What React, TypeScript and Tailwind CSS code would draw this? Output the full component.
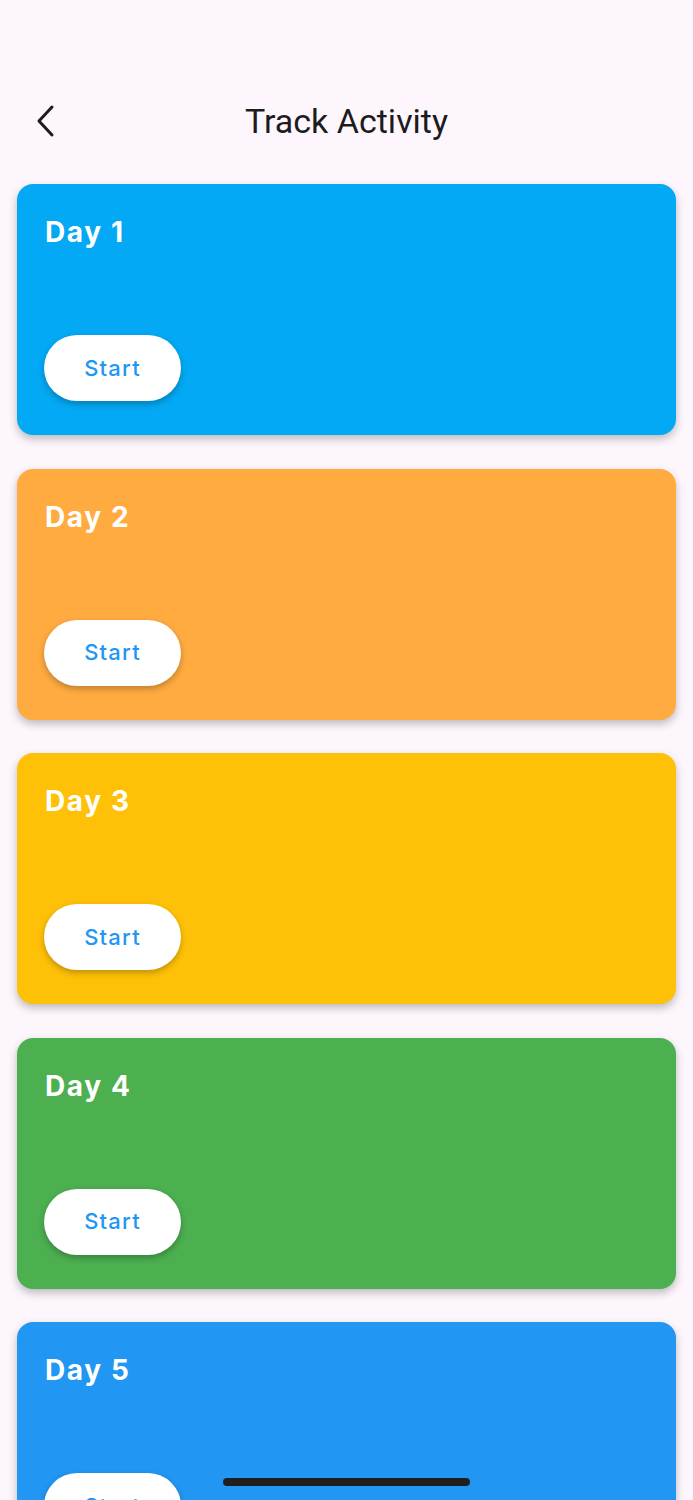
import React from 'react';

// ─── Data ────────────────────────────────────────────────────────────────────
const days = [
  { label: 'Day 1', bg: 'bg-[#03a9f4]' },
  { label: 'Day 2', bg: 'bg-[#ffab40]' },
  { label: 'Day 3', bg: 'bg-[#ffc107]' },
  { label: 'Day 4', bg: 'bg-[#4caf50]' },
  { label: 'Day 5', bg: 'bg-[#2196f3]' },
];

function BackIcon() {
  return (
    <svg width="24" height="34" viewBox="0 0 24 34" fill="none">
      <path d="M19 3 L6 17 L19 31" stroke="#1d1b20" strokeWidth="3" strokeLinecap="round" strokeLinejoin="round" />
    </svg>
  );
}

function DayCard({ label, bg }: { label: string; bg: string }) {
  return (
    <div className={`${bg} h-[251px] shrink-0 rounded-[16px] shadow-[0_4px_8px_rgba(0,0,0,0.25)] px-[27px] pt-[30px]`}>
      <div className="font-['Inter',sans-serif] text-[28px] font-bold leading-[36px] text-white tracking-[1.6px] pl-[1px]">{label}</div>
      <button className="mt-[85px] w-[137px] h-[66px] rounded-full bg-white shadow-[0_3px_6px_rgba(0,0,0,0.25)] font-['Inter',sans-serif] text-[22px] font-medium text-[#2196f3] tracking-[1.2px]">
        Start
      </button>
    </div>
  );
}

export default function App() {
  return (
    <div className="relative h-[1500px] w-[693px] overflow-hidden bg-[#fdf7fd]">
      {/* header */}
      <div className="flex h-[184px] items-start pt-[100px]">
        <div className="relative flex h-[42px] w-full items-center justify-center">
          <div className="absolute left-[33px] top-[4px]">
            <BackIcon />
          </div>
          <h1 className="font-['Roboto',sans-serif] text-[34px] font-normal leading-[42px] text-[#1d1b20]">Track Activity</h1>
        </div>
      </div>

      {/* cards */}
      <div className="flex flex-col gap-[33.5px] px-[17px]">
        {days.map((d) => (
          <DayCard key={d.label} label={d.label} bg={d.bg} />
        ))}
      </div>

      {/* home indicator */}
      <div className="absolute bottom-[14px] left-[223px] h-[8px] w-[247px] rounded-full bg-[#1f1f1f]" />
    </div>
  );
}
